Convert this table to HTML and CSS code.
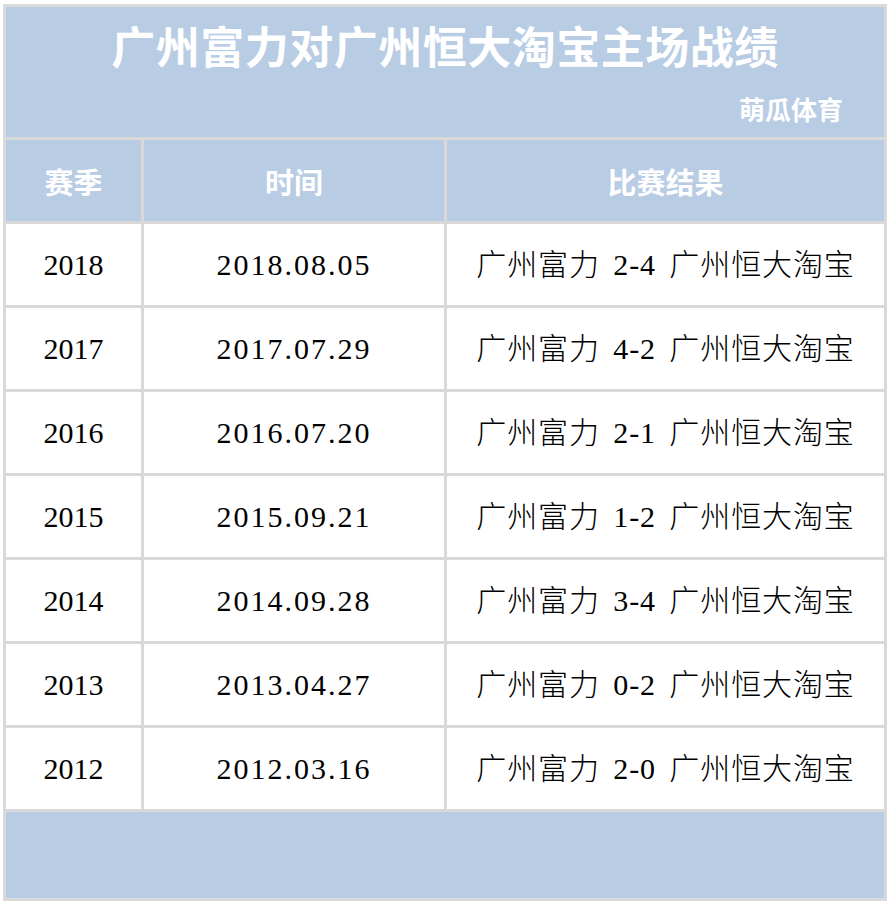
FILE: index.html
```html
<!DOCTYPE html>
<html lang="zh-CN">
<head>
<meta charset="utf-8">
<title>广州富力对广州恒大淘宝主场战绩</title>
<link rel="stylesheet" href="styles.css">
</head>
<body>
<table class="record">
  <colgroup>
    <col class="c-season">
    <col class="c-date">
    <col class="c-result">
  </colgroup>
  <thead>
    <tr class="title-row">
      <td colspan="3" class="title-cell">
        <div class="title">广州富力对广州恒大淘宝主场战绩</div>
        <div class="source">萌瓜体育</div>
      </td>
    </tr>
    <tr class="head-row">
      <th>赛季</th>
      <th>时间</th>
      <th>比赛结果</th>
    </tr>
  </thead>
  <tbody>
    <tr><td class="year">2018</td><td class="date">2018.08.05</td><td class="result">广州富力 2-4 广州恒大淘宝</td></tr>
    <tr><td class="year">2017</td><td class="date">2017.07.29</td><td class="result">广州富力 4-2 广州恒大淘宝</td></tr>
    <tr><td class="year">2016</td><td class="date">2016.07.20</td><td class="result">广州富力 2-1 广州恒大淘宝</td></tr>
    <tr><td class="year">2015</td><td class="date">2015.09.21</td><td class="result">广州富力 1-2 广州恒大淘宝</td></tr>
    <tr><td class="year">2014</td><td class="date">2014.09.28</td><td class="result">广州富力 3-4 广州恒大淘宝</td></tr>
    <tr><td class="year">2013</td><td class="date">2013.04.27</td><td class="result">广州富力 0-2 广州恒大淘宝</td></tr>
    <tr><td class="year">2012</td><td class="date">2012.03.16</td><td class="result">广州富力 2-0 广州恒大淘宝</td></tr>
  </tbody>
  <tfoot>
    <tr class="foot-row"><td colspan="3"></td></tr>
  </tfoot>
</table>
</body>
</html>
```

FILE: styles.css
```css
html, body {
  margin: 0;
  padding: 0;
  background: #ffffff;
}

body {
  padding: 4px 0 0 3px;
}

.record {
  border-collapse: separate;
  border-spacing: 3px;
  background: #d9d9d9;
  width: 884px;
  table-layout: fixed;
}

.c-season { width: 135px; }
.c-date { width: 300px; }
.c-result { width: 437px; }

.record td,
.record th {
  padding: 0;
}

.title-cell {
  background: #b8cce4;
  height: 130px;
  vertical-align: top;
  color: #ffffff;
  font-family: "Noto Sans CJK SC", sans-serif;
  font-weight: 700;
}

.title {
  margin-top: 13px;
  font-size: 44px;
  line-height: 50px;
  text-align: center;
  letter-spacing: 0.5px;
}

.source {
  margin-top: 24px;
  padding-right: 41px;
  font-size: 26px;
  line-height: 30px;
  text-align: right;
}

.head-row th {
  background: #b8cce4;
  height: 81px;
  color: #ffffff;
  font-family: "Noto Sans CJK SC", sans-serif;
  font-weight: 700;
  font-size: 29px;
  text-align: center;
  vertical-align: middle;
}

tbody td {
  background: #ffffff;
  height: 81px;
  text-align: center;
  vertical-align: middle;
  color: #000000;
  font-family: "Liberation Serif", "Noto Sans CJK SC", serif;
  font-weight: 400;
  font-size: 30px;
  line-height: 36px;
  padding-top: 5px;
}

.date {
  letter-spacing: 2px;
}

.result {
  word-spacing: 5px;
  letter-spacing: 0.9px;
  font-weight: 300;
}

.foot-row td {
  background: #b8cce4;
  height: 86px;
}
```
